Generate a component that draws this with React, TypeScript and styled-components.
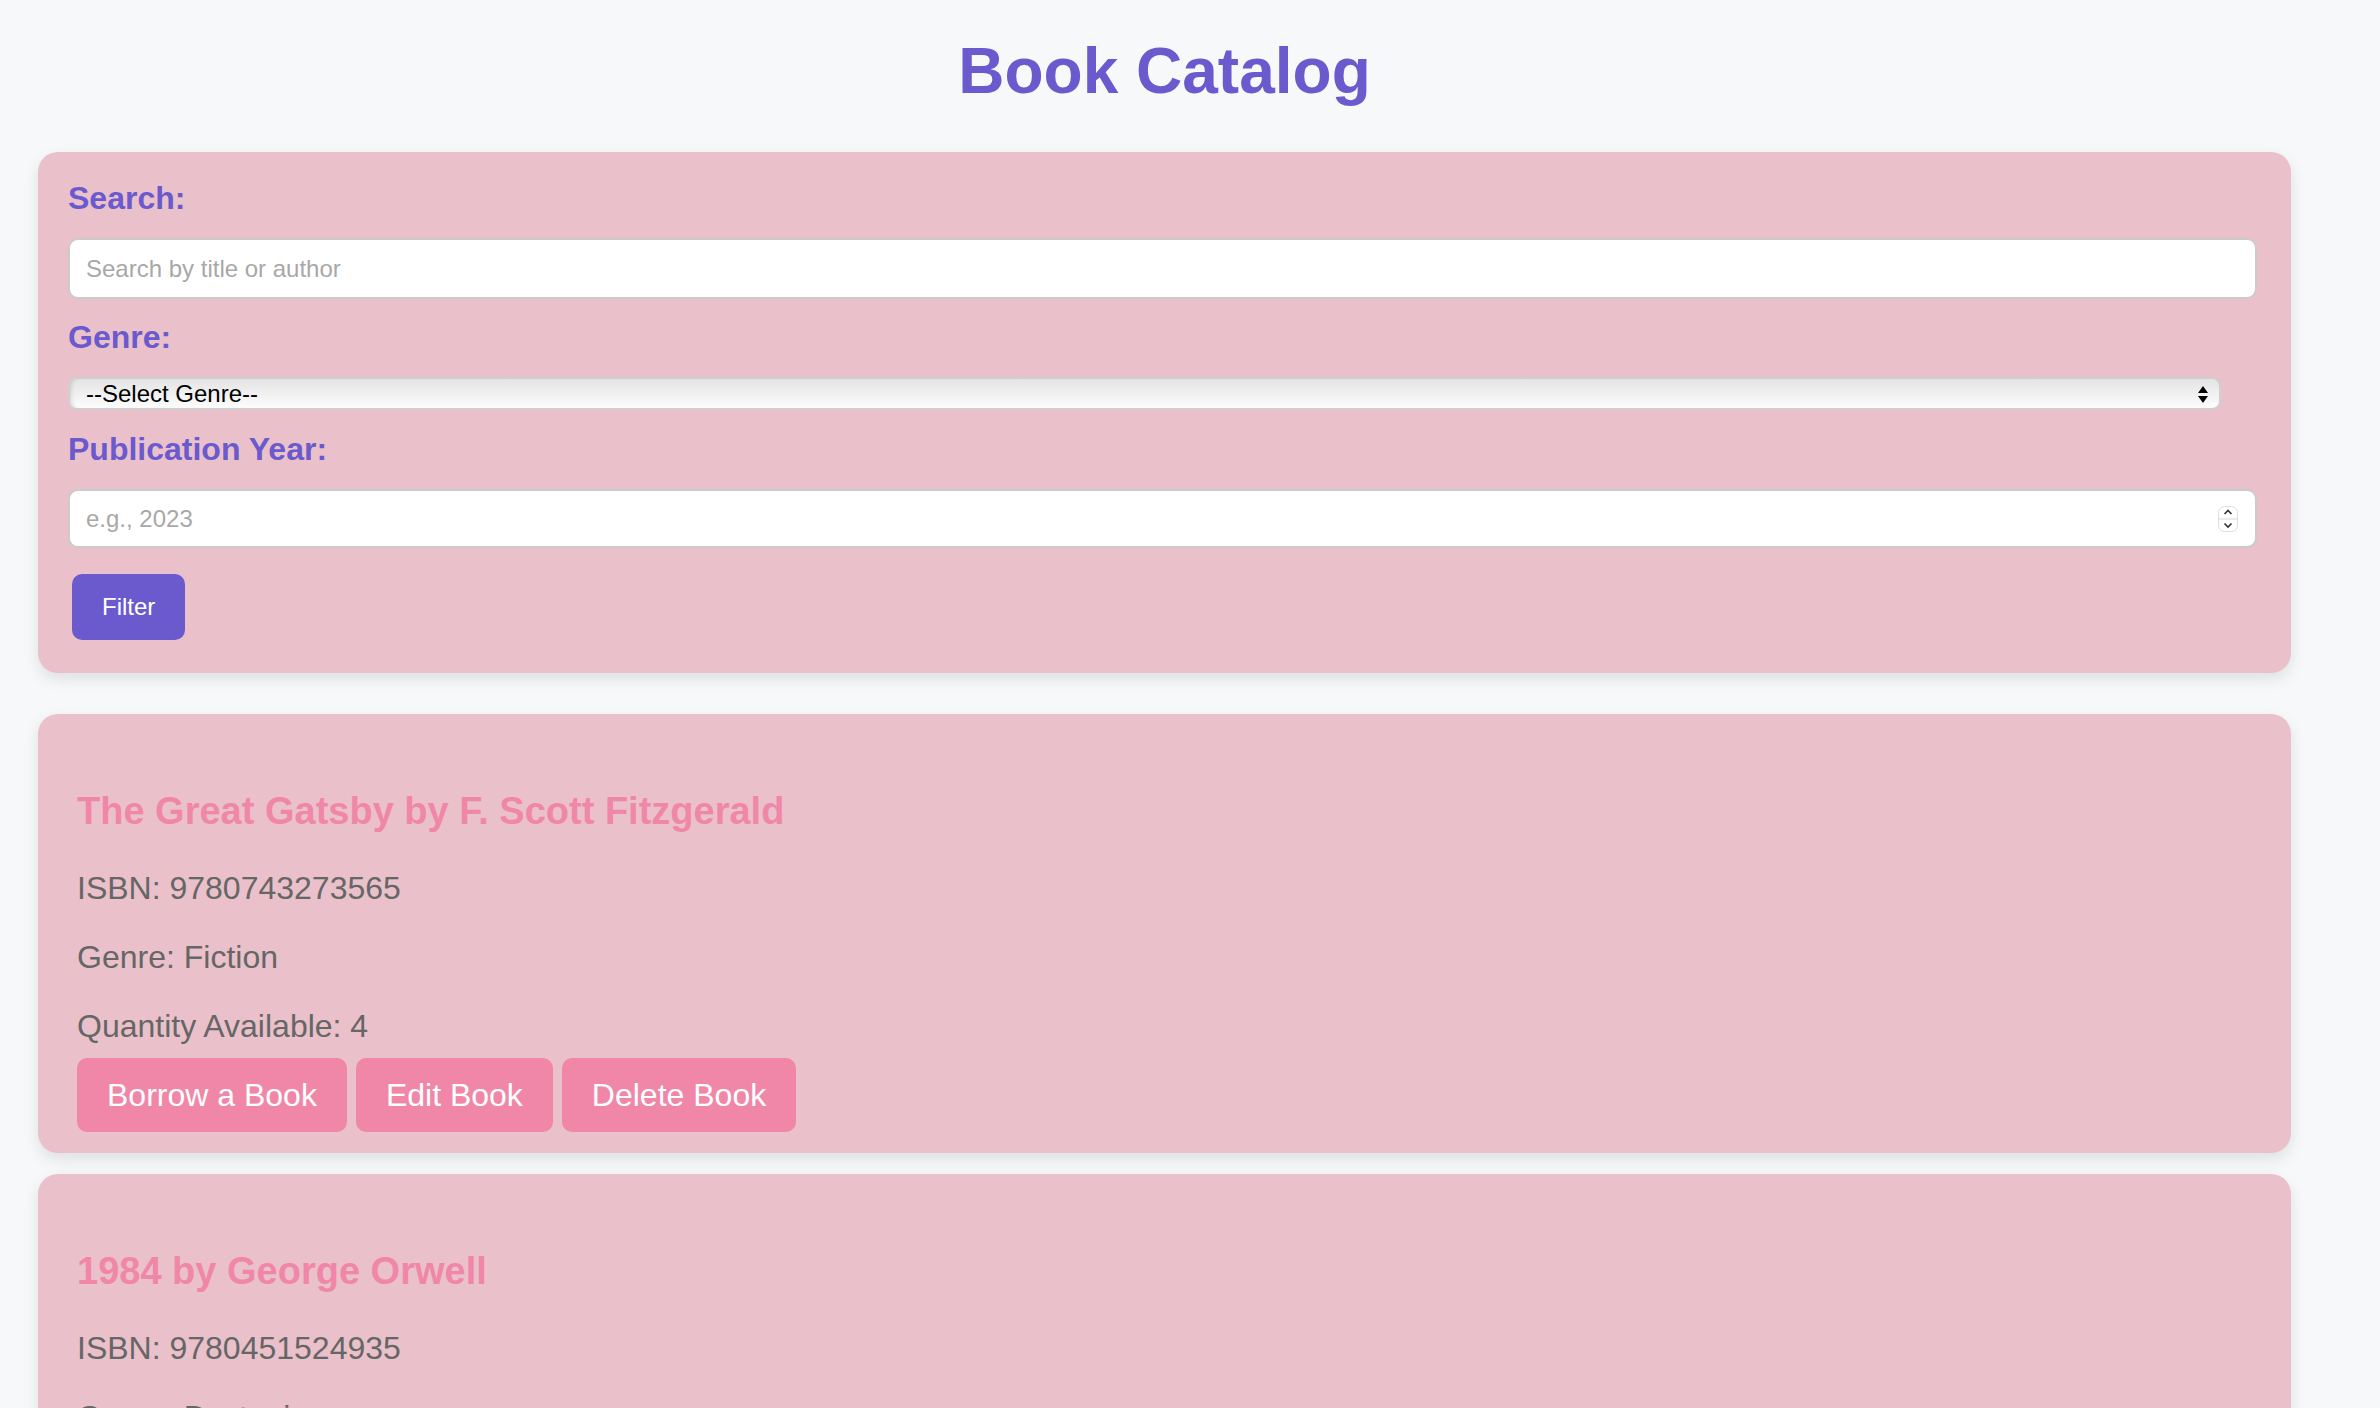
import React, { useState } from 'react';
import styled, { createGlobalStyle } from 'styled-components';

interface Book {
  id: number;
  title: string;
  author: string;
  isbn: string;
  genre: string;
  quantity: number;
}

const books: Book[] = [
  { id: 1, title: 'The Great Gatsby', author: 'F. Scott Fitzgerald', isbn: '9780743273565', genre: 'Fiction', quantity: 4 },
  { id: 2, title: '1984', author: 'George Orwell', isbn: '9780451524935', genre: 'Dystopian', quantity: 6 },
  { id: 3, title: 'To Kill a Mockingbird', author: 'Harper Lee', isbn: '9780061120084', genre: 'Fiction', quantity: 3 }
];

const purple = '#6a5acd';
const pink = '#f087a9';
const panelPink = '#eac1ca';

const GlobalStyle = createGlobalStyle`
  html, body {
    margin: 0;
    padding: 0;
    background: #f7f8fa;
    font-family: "Liberation Sans", Arial, Helvetica, sans-serif;
  }
  * { box-sizing: border-box; }
`;

const Page = styled.div`
  width: 2253px;
  margin-left: 38px;
  padding-top: 34px;
`;

const Heading = styled.h1`
  margin: 0 0 44px;
  font-size: 64px;
  line-height: 74px;
  font-weight: 700;
  text-align: center;
  color: ${purple};
`;

const Panel = styled.div`
  background: ${panelPink};
  border-radius: 20px;
  box-shadow: 0 6px 16px rgba(0, 0, 0, 0.1);
`;

const FilterPanel = styled(Panel)`
  padding: 28px 30px 33px;
  margin-bottom: 41px;
`;

const Label = styled.label`
  display: block;
  font-size: 32px;
  line-height: 37px;
  font-weight: 700;
  color: ${purple};
  margin-bottom: 21px;
`;

const TextInput = styled.input<{ $height: number; $gap: number }>`
  display: block;
  width: calc(100% - 4px);
  height: ${p => p.$height}px;
  margin: 0 0 ${p => p.$gap}px;
  padding: 0 16px;
  border: 2px solid #cbcbcb;
  border-radius: 10px;
  background: #fff;
  font-family: inherit;
  font-size: 24px;
  color: #222;
  outline: none;

  &::placeholder {
    color: #a8a8a8;
  }

  &::-webkit-inner-spin-button,
  &::-webkit-outer-spin-button {
    -webkit-appearance: none;
    margin: 0;
  }
  -moz-appearance: textfield;
`;

const FieldWrap = styled.div<{ $width: string }>`
  position: relative;
  width: ${p => p.$width};
`;

const GenreSelect = styled.select`
  display: block;
  width: 100%;
  height: 33px;
  margin: 0 0 21px;
  padding: 0 16px;
  appearance: none;
  -webkit-appearance: none;
  border: 2px solid #cfcfcf;
  border-radius: 9px;
  background: linear-gradient(#e4e4e4, #f1f1f1 55%, #fdfdfd);
  box-shadow: inset 4px 0 4px -3px rgba(0, 0, 0, 0.15);
  font-family: inherit;
  font-size: 24px;
  color: #000;
  outline: none;
`;

const SelectArrow = styled.svg`
  position: absolute;
  right: 13px;
  top: 9px;
  pointer-events: none;
`;

const Spinner = styled.svg`
  position: absolute;
  right: 23px;
  top: 17px;
  pointer-events: none;
`;

const FilterButton = styled.button`
  height: 66px;
  margin-left: 4px;
  padding: 0 30px;
  border: none;
  border-radius: 10px;
  background: ${purple};
  color: #fff;
  font-family: inherit;
  font-size: 24px;
  cursor: pointer;
`;

const BookCard = styled(Panel)`
  padding: 76px 39px 21px;
  margin-bottom: 21px;
`;

const BookTitle = styled.h3`
  margin: 0 0 37px;
  font-size: 38px;
  line-height: 43px;
  font-weight: 700;
  color: ${pink};
`;

const Info = styled.p`
  margin: 0 0 32px;
  font-size: 32px;
  line-height: 37px;
  color: #666;

  &:last-of-type {
    margin-bottom: 13px;
  }
`;

const Actions = styled.div`
  display: flex;
  gap: 9px;
`;

const ActionButton = styled.button`
  height: 74px;
  padding: 0 30px;
  border: none;
  border-radius: 10px;
  background: ${pink};
  color: #fff;
  font-family: inherit;
  font-size: 32px;
  cursor: pointer;
`;

const App: React.FC = () => {
  const [search, setSearch] = useState('');
  const [genre, setGenre] = useState('');
  const [year, setYear] = useState('');

  return (
    <>
      <GlobalStyle />
      <Page>
        <Heading>Book Catalog</Heading>

        <FilterPanel>
          <Label htmlFor='search'>Search:</Label>
          <TextInput
            id='search'
            type='text'
            placeholder='Search by title or author'
            value={search}
            onChange={e => setSearch(e.target.value)}
            $height={61}
            $gap={20}
          />

          <Label htmlFor='genre'>Genre:</Label>
          <FieldWrap $width='calc(100% - 40px)'>
            <GenreSelect id='genre' value={genre} onChange={e => setGenre(e.target.value)}>
              <option value=''>--Select Genre--</option>
              <option value='Fiction'>Fiction</option>
              <option value='Dystopian'>Dystopian</option>
              <option value='Non-Fiction'>Non-Fiction</option>
            </GenreSelect>
            <SelectArrow width='10' height='17' viewBox='0 0 10 17'>
              <path d='M5 0 L10 7 L0 7 Z' fill='#000' />
              <path d='M0 10 L10 10 L5 17 Z' fill='#000' />
            </SelectArrow>
          </FieldWrap>

          <Label htmlFor='year'>Publication Year:</Label>
          <FieldWrap $width='100%'>
            <TextInput
              id='year'
              type='number'
              placeholder='e.g., 2023'
              value={year}
              onChange={e => setYear(e.target.value)}
              $height={59}
              $gap={26}
            />
            <Spinner width='20' height='26' viewBox='0 0 20 26'>
              <rect x='0.5' y='0.5' width='19' height='25' rx='6' fill='#fff' stroke='#dcdcdc' />
              <line x1='1' y1='13' x2='19' y2='13' stroke='#d6d6d6' />
              <path d='M6.5 8 L10 4.5 L13.5 8' fill='none' stroke='#333' strokeWidth='1.6' />
              <path d='M6.5 17.5 L10 21 L13.5 17.5' fill='none' stroke='#333' strokeWidth='1.6' />
            </Spinner>
          </FieldWrap>

          <FilterButton type='button'>Filter</FilterButton>
        </FilterPanel>

        {books.map(book => (
          <BookCard key={book.id}>
            <BookTitle>
              {book.title} by {book.author}
            </BookTitle>
            <Info>ISBN: {book.isbn}</Info>
            <Info>Genre: {book.genre}</Info>
            <Info>Quantity Available: {book.quantity}</Info>
            <Actions>
              <ActionButton type='button'>Borrow a Book</ActionButton>
              <ActionButton type='button'>Edit Book</ActionButton>
              <ActionButton type='button'>Delete Book</ActionButton>
            </Actions>
          </BookCard>
        ))}
      </Page>
    </>
  );
};

export default App;
